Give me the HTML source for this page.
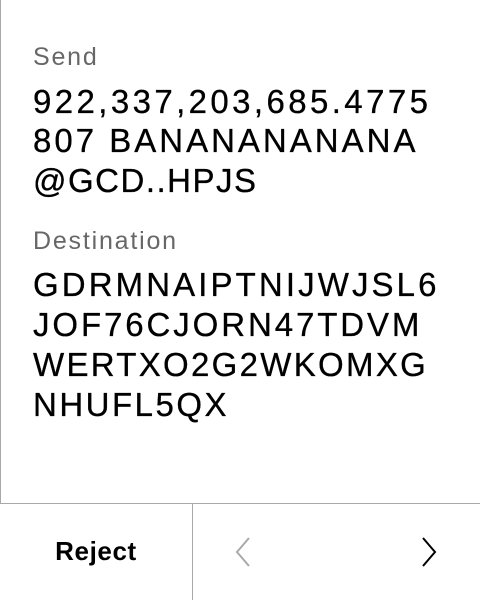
<!DOCTYPE html>
<html><head><style>
body{margin:0;width:480px;height:600px;background:#fff;position:relative;overflow:hidden;font-family:"Liberation Sans",sans-serif;}
.l{position:absolute;left:0;top:0;width:1px;height:504px;background:#a8a8a8}
.t{position:absolute;left:33px;white-space:nowrap;line-height:40px;}
.lab{font-size:25px;color:#676767;letter-spacing:1.8px;line-height:30px}
.big{font-size:33px;color:#000;-webkit-text-stroke:0.3px #000}
.h{position:absolute;left:0;top:503px;width:480px;height:1px;background:#a8a8a8}
.v{position:absolute;left:192px;top:504px;width:1px;height:96px;background:#a8a8a8}
.rej{position:absolute;left:0;width:192px;top:536px;text-align:center;font-size:26px;font-weight:bold;letter-spacing:0.6px}
</style></head><body>
<div class="l"></div>
<div class="t lab" style="top:42px">Send</div>
<div class="t big" style="top:82px;letter-spacing:3.4px">922,337,203,685.4775</div>
<div class="t big" style="top:121px;letter-spacing:3px">807 BANANANANANA</div>
<div class="t big" style="top:161px;letter-spacing:1.5px">@GCD..HPJS</div>
<div class="t lab" style="top:226px">Destination</div>
<div class="t big" style="top:265px;letter-spacing:3.1px">GDRMNAIPTNIJWJSL6</div>
<div class="t big" style="top:305px;letter-spacing:2.9px">JOF76CJORN47TDVM</div>
<div class="t big" style="top:345px;letter-spacing:2.3px">WERTXO2G2WKOMXG</div>
<div class="t big" style="top:385px;letter-spacing:2.5px">NHUFL5QX</div>
<div class="h"></div><div class="v"></div>
<div class="rej">Reject</div>
<svg style="position:absolute;left:230px;top:536px" width="24" height="32"><path d="M19 2 L7 16 L19 30" fill="none" stroke="#aaa" stroke-width="2"/></svg>
<svg style="position:absolute;left:418px;top:536px" width="24" height="32"><path d="M5 2 L17 16 L5 30" fill="none" stroke="#000" stroke-width="2"/></svg>
</body></html>
